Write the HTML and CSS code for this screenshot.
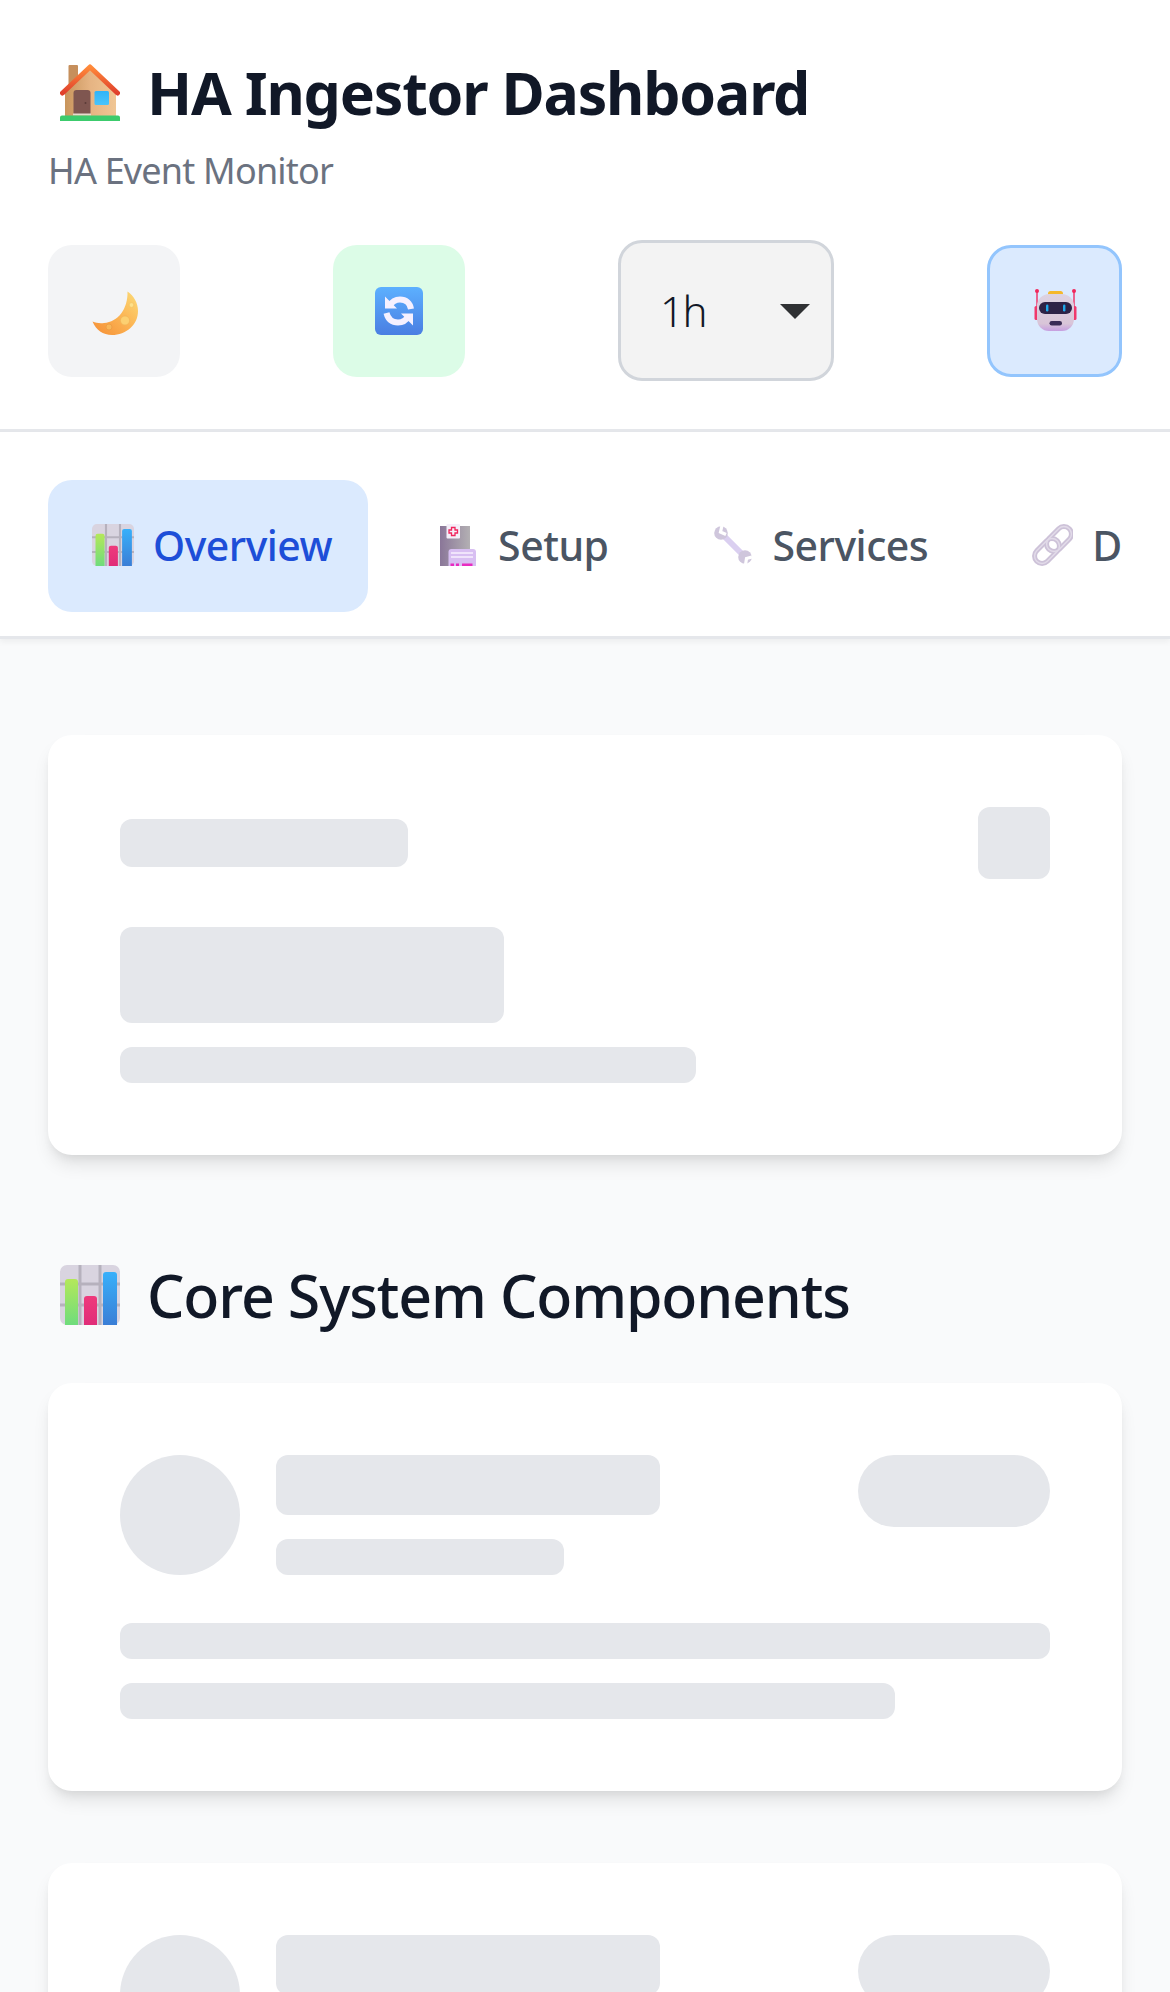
FILE: index.html
```html
<!DOCTYPE html>
<html lang="en">
<head>
  <meta charset="UTF-8">
  <meta name="viewport" content="width=device-width, initial-scale=1.0">
  <title>HA Ingestor Dashboard</title>
  <link rel="stylesheet" href="styles.css">
</head>
<body>
  <svg class="defs" width="0" height="0">
    <defs>
      <linearGradient id="barGreen" x1="0" y1="0" x2="0" y2="1"><stop offset="0" stop-color="#b4e85a"/><stop offset="1" stop-color="#6fdc7c"/></linearGradient>
      <linearGradient id="barPink" x1="0" y1="0" x2="0" y2="1"><stop offset="0" stop-color="#ee3a7c"/><stop offset="1" stop-color="#e02c78"/></linearGradient>
      <linearGradient id="barBlue" x1="0" y1="0" x2="0" y2="1"><stop offset="0" stop-color="#38b0fa"/><stop offset="1" stop-color="#3a7ed6"/></linearGradient>
      <symbol id="chart" viewBox="0 0 60 60">
        <rect width="60" height="60" rx="7" fill="#d9d4e0"/>
        <path d="M20 0V60M40 0V60M0 19H60M0 40H60" stroke="#b6b1bd" stroke-width="3"/>
        <path d="M5 60V17a3 3 0 0 1 3-3h7a3 3 0 0 1 3 3V60Z" fill="url(#barGreen)"/>
        <path d="M24 60V34a3 3 0 0 1 3-3h7a3 3 0 0 1 3 3V60Z" fill="url(#barPink)"/>
        <path d="M43 60V10a3 3 0 0 1 3-3h8a3 3 0 0 1 3 3V60Z" fill="url(#barBlue)"/>
      </symbol>
    </defs>
  </svg>

  <header class="topbar">
    <h1 class="page-title">
      <svg class="title-icon" viewBox="0 0 60 57">
        <defs>
          <linearGradient id="roof" x1="0" y1="0" x2="0" y2="1"><stop offset="0" stop-color="#ff8a3a"/><stop offset="1" stop-color="#e0402c"/></linearGradient>
          <linearGradient id="wall" x1="0" y1="0" x2="1" y2="0"><stop offset="0" stop-color="#c8955c"/><stop offset=".5" stop-color="#e6b483"/><stop offset="1" stop-color="#f0c694"/></linearGradient>
          <linearGradient id="pane" x1="0" y1="0" x2="0" y2="1"><stop offset="0" stop-color="#2fb4f8"/><stop offset="1" stop-color="#49c4fc"/></linearGradient>
        </defs>
        <rect x="8.5" y="1" width="9.5" height="24" rx="1" fill="#c68f5c"/>
        <path d="M5 52V28L30 5L56 28V52Z" fill="url(#wall)"/>
        <path d="M2.5 29L30 3L57.5 29" fill="none" stroke="url(#roof)" stroke-width="5" stroke-linecap="round" stroke-linejoin="round"/>
        <path d="M13.5 50V29a3 3 0 0 1 3-3h11a3 3 0 0 1 3 3V50Z" fill="#7f5650"/>
        <circle cx="25.5" cy="39" r="1" fill="#5c3b38"/>
        <rect x="13" y="49.5" width="18" height="2" fill="#e8dcd0"/>
        <rect x="34.5" y="27" width="14.5" height="14" rx="1.5" fill="url(#pane)"/>
        <path d="M2 51.5H58a2 2 0 0 1 2 2V57H0V53.5a2 2 0 0 1 2-2Z" fill="#3ccb6d"/>
      </svg>
      HA Ingestor Dashboard
    </h1>
    <p class="page-sub">HA Event Monitor</p>
    <div class="controls">
      <button class="icon-btn btn-theme" type="button" aria-label="Theme">
        <svg class="btn-icon" viewBox="0 0 48 48">
          <defs>
            <linearGradient id="moon" x1="0" y1="1" x2="1" y2="0"><stop offset="0" stop-color="#f58e35"/><stop offset=".55" stop-color="#fcb655"/><stop offset="1" stop-color="#fbdc79"/></linearGradient>
          </defs>
          <path d="M37.5 4.5C44 9 48 16 48 24C48 38 36 48 22 48C13 48 6 43 2.5 34.5C6 36 10 36.5 14 36C28 35 38 22 37.5 4.5Z" fill="url(#moon)"/>
          <circle cx="35" cy="33.5" r="4.6" fill="#fcd071" stroke="#f3b457" stroke-width=".8"/>
          <circle cx="19" cy="40" r="3" fill="#f9b658" stroke="#ea9a44" stroke-width=".8"/>
          <circle cx="41.5" cy="18" r="2.4" fill="#fde08a" stroke="#f3c25f" stroke-width=".7"/>
        </svg>
      </button>
      <button class="icon-btn btn-refresh" type="button" aria-label="Refresh">
        <svg class="btn-icon" viewBox="0 0 48 48">
          <defs>
            <linearGradient id="tile" x1="0" y1="0" x2="0" y2="1"><stop offset="0" stop-color="#5cb0ff"/><stop offset="1" stop-color="#4a7ee2"/></linearGradient>
          </defs>
          <rect width="48" height="48" rx="6" fill="url(#tile)"/>
          <g fill="none" stroke="#f5f0ff" stroke-width="6">
            <path d="M14.5 19C17 14.5 21 12.5 25 12.5C31 12.5 35 16 36 22"/>
            <path d="M11.5 26C13 32 17 35.5 23 35.5C27 35.5 31 33.5 33.5 29"/>
          </g>
          <path d="M10 9.5V21.5H22ZM38 38.5V26.5H26Z" fill="#f5f0ff"/>
        </svg>
      </button>
      <div class="range-wrap">
        <select class="range-select">
          <option>1h</option>
          <option>6h</option>
          <option>24h</option>
        </select>
      </div>
      <button class="icon-btn btn-bot" type="button" aria-label="Assistant">
        <svg class="btn-icon" viewBox="0 0 48 48">
          <defs>
            <linearGradient id="botHead" x1="0" y1="0" x2="0" y2="1"><stop offset="0" stop-color="#ddd3e2"/><stop offset=".8" stop-color="#d9c5d8"/><stop offset="1" stop-color="#c69fe0"/></linearGradient>
          </defs>
          <path d="M6 4V20M43 4V20" stroke="#f0386c" stroke-width="1.5"/>
          <circle cx="6" cy="4" r="2" fill="#f0285c"/>
          <circle cx="43" cy="4" r="2" fill="#f0285c"/>
          <rect x="3.5" y="19" width="4" height="14" rx="1.5" fill="#f0386c"/>
          <rect x="41.5" y="19" width="4" height="14" rx="1.5" fill="#f0386c"/>
          <rect x="17" y="4" width="15" height="5" rx="2.5" fill="#f5b82c"/>
          <rect x="6" y="7" width="37" height="37" rx="12" fill="url(#botHead)"/>
          <rect x="8" y="15" width="33" height="12" rx="6" fill="#2d2246"/>
          <rect x="15" y="17.5" width="2.4" height="7" rx="1.2" fill="#1fa8ea"/>
          <rect x="32" y="17.5" width="2.4" height="7" rx="1.2" fill="#1fa8ea"/>
          <rect x="18.5" y="34" width="12.5" height="4.5" rx="2.2" fill="#3a2c55"/>
        </svg>
      </button>
    </div>
  </header>

  <nav class="tabs">
    <div class="tabs-inner">
      <a class="tab active" href="#">
        <svg class="tab-icon"><use href="#chart"/></svg>
        Overview
      </a>
      <a class="tab" href="#">
        <svg class="tab-icon" viewBox="0 0 42 42">
          <defs>
            <linearGradient id="hospital" x1="0" y1="0" x2="1" y2="0"><stop offset="0" stop-color="#8a7698"/><stop offset="1" stop-color="#b3b0b3"/></linearGradient>
          </defs>
          <path d="M5 2H33V42H3V2Z" fill="url(#hospital)"/>
          <rect x="9.5" y="0" width="13.5" height="14.5" rx="1" fill="#f4eef8"/>
          <path d="M14.5 3.5H18V6H20.5V9H18V11.5H14.5V9H12V6H14.5Z" fill="#f4eef8" stroke="#f0245c" stroke-width="1.3"/>
          <path d="M11.5 28a3 3 0 0 1 3-3H36a3 3 0 0 1 3 3V42H11.5Z" fill="#d8bff2"/>
          <path d="M14 29H36M14 33H36" stroke="#f0e4fb" stroke-width="2"/>
          <path d="M13.5 39.5H17V42H13.5ZM19 39.5H22V42H19ZM25 39.5H35.5V42H25Z" fill="#e82cc0"/>
        </svg>
        Setup
      </a>
      <a class="tab" href="#">
        <svg class="tab-icon" viewBox="0 0 42 42">
          <path d="M10 10L32 32" stroke="#dacff0" stroke-width="6"/>
          <circle cx="9" cy="9" r="6.8" fill="#cfc6dc"/>
          <circle cx="33" cy="33" r="6.8" fill="#cfc6dc"/>
          <path d="M10 1.5L8.5 8L14 10.5M33.5 41L34.5 34.5L40 33" fill="none" stroke="#fff" stroke-width="3.2"/>
        </svg>
        Services
      </a>
      <a class="tab" href="#">
        <svg class="tab-icon" viewBox="-1 0 42 42">
          <g fill="none" stroke="#cdc2d8" stroke-width="5">
            <rect x="12.5" y="7.5" width="29" height="15" rx="7.5" transform="rotate(-45 27 15)"/>
            <rect x="0.5" y="19.5" width="29" height="15" rx="7.5" transform="rotate(-45 15 27)"/>
          </g>
          <g fill="none" stroke="#e2dbe9" stroke-width="1.4">
            <rect x="12.5" y="7.5" width="29" height="15" rx="7.5" transform="rotate(-45 27 15)"/>
            <rect x="0.5" y="19.5" width="29" height="15" rx="7.5" transform="rotate(-45 15 27)"/>
          </g>
        </svg>
        D
      </a>
    </div>
  </nav>

  <main class="content">
    <section class="card">
      <div class="stat-head">
        <div class="sk sk-stat-title"></div>
        <div class="sk sk-stat-icon"></div>
      </div>
      <div class="sk sk-stat-value"></div>
      <div class="sk sk-stat-sub"></div>
    </section>

    <h2 class="section-title">
      <svg class="section-icon"><use href="#chart"/></svg>
      Core System Components
    </h2>

    <section class="card service-card">
      <div class="service-head">
        <div class="sk sk-avatar"></div>
        <div class="service-names">
          <div class="sk sk-name"></div>
          <div class="sk sk-role"></div>
        </div>
        <div class="sk sk-pill"></div>
      </div>
      <div class="sk sk-line"></div>
      <div class="sk sk-line short"></div>
    </section>

    <section class="card service-card">
      <div class="service-head">
        <div class="sk sk-avatar"></div>
        <div class="service-names">
          <div class="sk sk-name"></div>
          <div class="sk sk-role"></div>
        </div>
        <div class="sk sk-pill"></div>
      </div>
      <div class="sk sk-line"></div>
      <div class="sk sk-line short"></div>
    </section>
  </main>
</body>
</html>
```

FILE: styles.css
```css
* {
  box-sizing: border-box;
}
html, body {
  margin: 0;
  height: 100vh;
  overflow: hidden;
}
body {
  font-family: "Noto Sans", "Open Sans", sans-serif;
  background-color: #f9fafb;
  color: #111827;
}
.defs {
  display: block;
  height: 0;
}

/* header */
.topbar {
  background: #fff;
  padding: 44px 48px 48px;
  border-bottom: 3px solid #e5e7eb;
}
.page-title {
  display: flex;
  align-items: center;
  margin: 0;
  height: 96px;
  font-size: 59px;
  font-weight: 700;
  letter-spacing: -1.2px;
  white-space: nowrap;
}
.title-icon {
  width: 60px;
  height: 57px;
  margin: 0 27px 0 12px;
  flex: none;
}
.page-sub {
  margin: 7px 0 0;
  height: 48px;
  line-height: 48px;
  font-size: 36px;
  letter-spacing: -0.8px;
  color: #6b7280;
}
.controls {
  display: flex;
  justify-content: space-between;
  align-items: center;
  margin-top: 45px;
}
.icon-btn {
  display: flex;
  align-items: center;
  justify-content: center;
  width: 132px;
  height: 132px;
  padding: 0;
  border: 0;
  border-radius: 24px;
}
.btn-icon {
  width: 48px;
  height: 48px;
}
.btn-theme { background: #f3f4f6; }
.btn-refresh { background: #dcfce7; }
.btn-bot {
  width: 135px;
  background: #dbeafe;
  border: 3px solid #93c5fd;
}
.range-wrap {
  position: relative;
  width: 216px;
  height: 141px;
}
.range-wrap::after {
  content: "";
  position: absolute;
  right: 24px;
  top: 64px;
  border-style: solid;
  border-width: 15px 15px 0;
  border-color: #2f3133 transparent transparent;
  pointer-events: none;
}
.range-select {
  appearance: none;
  width: 100%;
  height: 100%;
  padding: 0 0 0 39px;
  font-family: inherit;
  font-size: 42px;
  font-weight: 300;
  letter-spacing: -1.5px;
  color: #111827;
  background: #f3f3f3;
  border: 3px solid #d1d5db;
  border-radius: 24px;
}

/* tabs */
.tabs {
  background: #fff;
  padding: 48px 48px 24px;
  border-bottom: 3px solid #e5e7eb;
  box-shadow: 0 3px 6px rgba(0,0,0,0.05);
  position: relative;
}
.tabs-inner {
  display: flex;
  gap: 25px;
  margin-right: -3px;
  overflow: hidden;
}
.tab {
  display: flex;
  align-items: center;
  flex: none;
  gap: 19px;
  height: 132px;
  padding: 0 34px 2px 44px;
  border-radius: 24px;
  font-size: 41px;
  font-weight: 500;
  letter-spacing: -0.5px;
  color: #4b5563;
  text-decoration: none;
}
.tab.active {
  padding-right: 36px;
  background: #dbeafe;
  color: #1d4ed8;
}
.tab-icon {
  width: 42px;
  height: 42px;
  flex: none;
}

/* content */
.content {
  padding: 96px 48px 0;
}
.card {
  background: #fff;
  padding: 72px;
  border-radius: 24px;
  box-shadow: 0 12px 18px -3px rgba(0,0,0,0.1), 0 6px 12px -6px rgba(0,0,0,0.1);
}
.service-card {
  margin-bottom: 72px;
}
.section-title {
  display: flex;
  align-items: center;
  height: 84px;
  margin: 98px 0 46px;
  font-size: 59px;
  font-weight: 500;
  letter-spacing: -1.13px;
  white-space: nowrap;
}
.section-icon {
  width: 60px;
  height: 60px;
  margin: 0 27px 0 12px;
  flex: none;
}

/* skeletons */
.sk {
  background: #e5e7eb;
  border-radius: 12px;
}
.stat-head {
  display: flex;
  justify-content: space-between;
  align-items: center;
  margin-bottom: 48px;
}
.sk-stat-title { width: 288px; height: 48px; }
.sk-stat-icon { width: 72px; height: 72px; }
.sk-stat-value { width: 384px; height: 96px; margin-bottom: 24px; }
.sk-stat-sub { width: 576px; height: 36px; }
.service-head {
  display: flex;
  align-items: flex-start;
  gap: 36px;
  margin-bottom: 48px;
}
.sk-avatar {
  width: 120px;
  height: 120px;
  border-radius: 50%;
  flex: none;
}
.service-names {
  flex: 1;
}
.sk-name { width: 384px; height: 60px; margin-bottom: 24px; }
.sk-role { width: 288px; height: 36px; }
.sk-pill {
  width: 192px;
  height: 72px;
  border-radius: 36px;
  flex: none;
}
.sk-line { height: 36px; margin-bottom: 24px; }
.sk-line.short { width: 83.33%; margin-bottom: 0; }
```
